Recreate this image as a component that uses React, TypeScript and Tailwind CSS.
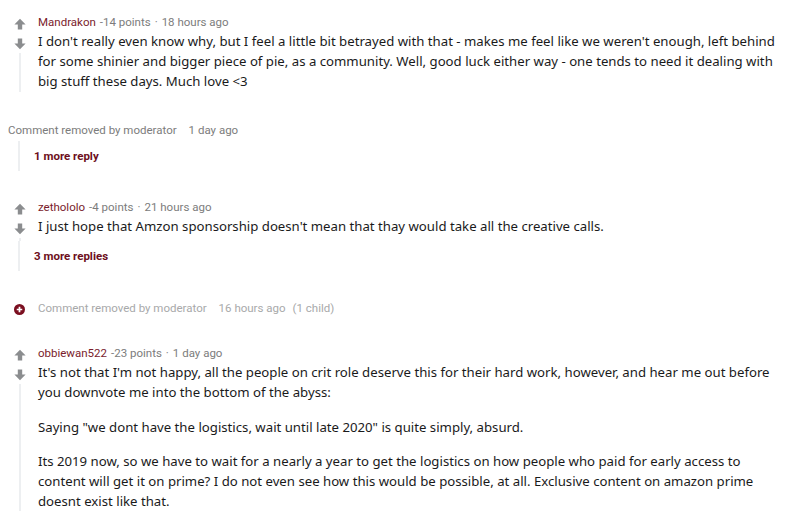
import React from 'react';

const bodyFont = { fontFamily: '"Noto Sans", "Open Sans", sans-serif' };
const metaFont = { fontFamily: 'Roboto, "Liberation Sans", sans-serif' };

const UpArrow = () => (
  <svg width="12" height="12" viewBox="0 0 12 12" className="block">
    <path d="M6 0.8 L11.6 6.4 H8.2 V11.4 H3.8 V6.4 H0.4 Z" fill="#8b8d8f" />
  </svg>
);

const DownArrow = () => (
  <svg width="12" height="12" viewBox="0 0 12 12" className="block">
    <path d="M6 11.2 L11.6 5.6 H8.2 V0.6 H3.8 V5.6 H0.4 Z" fill="#8b8d8f" />
  </svg>
);

const PlusCircle = () => (
  <svg width="11" height="11" viewBox="0 0 12 12" className="block">
    <circle cx="6" cy="6" r="6" fill="#7b0f20" />
    <path d="M6 3 V9 M3 6 H9" stroke="#fff" strokeWidth="1.9" />
  </svg>
);

interface CommentProps {
  user: string;
  points: string;
  time: string;
  children: React.ReactNode;
}

// a single voted comment: arrows + thread line on the left, meta and body on the right
const Comment: React.FC<CommentProps> = ({ user, points, time, children }) => (
  <div className="flex">
    <div className="w-[38px] flex flex-col items-center shrink-0 pl-[1px]">
      <div className="mt-[3px]"><UpArrow /></div>
      <div className="mt-[8px]"><DownArrow /></div>
      <div className="mt-[3px] w-[2px] flex-1 bg-[#edeff1]" />
    </div>
    <div className="flex-1 pr-[12px]">
      <div className="h-4 flex items-center text-[11.5px] text-[#7c7c7c]" style={metaFont}>
        <span className="text-[#7a1c2c]">{user}</span>
        <span className="ml-[4px]">{points} points</span>
        <span className="mx-[4px]">·</span>
        <span>{time}</span>
      </div>
      <div className="text-[13.2px] leading-5 text-[#1a1a1b]" style={bodyFont}>
        {children}
      </div>
    </div>
  </div>
);

const MoreReplies: React.FC<{ label: string }> = ({ label }) => (
  <div className="flex h-[30px]">
    <div className="w-[38px] flex justify-center shrink-0">
      <div className="w-[2px] h-full bg-[#edeff1]" />
    </div>
    <div className="-ml-[4px] pt-[7px] text-[11.5px] font-bold text-[#6d0f1c] leading-4" style={metaFont}>
      {label}
    </div>
  </div>
);

export default function App() {
  return (
    <div className="w-[800px] h-[513px] overflow-hidden bg-white" style={bodyFont}>
      <div className="pt-[15px]">
        <Comment user="Mandrakon" points="-14" time="18 hours ago">
          <p className="pb-[1px]">
            I don't really even know why, but I feel a little bit betrayed with that - makes me feel like we weren't enough, left behind for some shinier and bigger piece of pie, as a community. Well, good luck either way - one tends to need it dealing with big stuff these days. Much love &lt;3
          </p>
        </Comment>
      </div>

      {/* removed comment with collapsed reply */}
      <div className="mt-[31px] pl-[8px] h-4 flex items-center text-[11.5px] text-[#7c7c7c]" style={metaFont}>
        <span>Comment removed by moderator</span>
        <span className="ml-[12px]">1 day ago</span>
      </div>
      <div className="mt-[2px]">
        <MoreReplies label="1 more reply" />
      </div>

      <div className="mt-[29px]">
        <Comment user="zethololo" points="-4" time="21 hours ago">
          <p className="pb-[5px]">I just hope that Amzon sponsorship doesn't mean that thay would take all the creative calls.</p>
        </Comment>
        <MoreReplies label="3 more replies" />
      </div>

      {/* collapsed removed comment */}
      <div className="mt-[30px] flex items-center h-4" style={metaFont}>
        <div className="w-[38px] flex justify-center shrink-0">
          <PlusCircle />
        </div>
        <div className="flex items-center text-[11.5px] text-[#a8a9aa]">
          <span>Comment removed by moderator</span>
          <span className="ml-[12px]">16 hours ago</span>
          <span className="ml-[7px]">(1 child)</span>
        </div>
      </div>

      <div className="mt-[29px]">
        <Comment user="obbiewan522" points="-23" time="1 day ago">
          <p>
            It's not that I'm not happy, all the people on crit role deserve this for their hard work, however, and hear me out before you downvote me into the bottom of the abyss:
          </p>
          <p className="mt-[15px]">Saying "we dont have the logistics, wait until late 2020" is quite simply, absurd.</p>
          <p className="mt-[14px]">
            Its 2019 now, so we have to wait for a nearly a year to get the logistics on how people who paid for early access to content will get it on prime? I do not even see how this would be possible, at all. Exclusive content on amazon prime doesnt exist like that.
          </p>
        </Comment>
      </div>
    </div>
  );
}
